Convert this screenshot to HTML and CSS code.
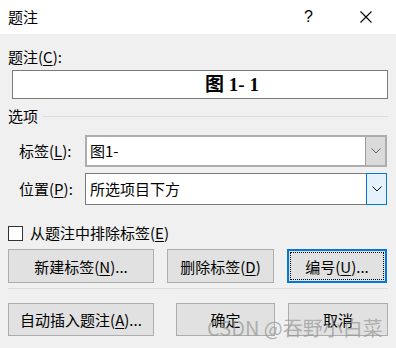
FILE: index.html
```html
<!DOCTYPE html>
<html lang="zh-CN">
<head>
    <meta charset="UTF-8">
    <title>题注</title>
    <link rel="stylesheet" href="styles.css">
</head>
<body>
    <div class="dialog">
        <div class="titlebar">
            <span class="title">题注</span>
            <span class="help">?</span>
            <span class="close">
                <svg width="12" height="12" viewBox="0 0 12 12"><path d="M0.5 0.5 L11.5 11.5 M11.5 0.5 L0.5 11.5" stroke="#000" stroke-width="1.1" fill="none"/></svg>
            </span>
        </div>

        <div class="content">
            <div class="caption-label">题注(<u>C</u>):</div>
            <div class="caption-box">图 1- 1</div>

            <div class="group-head">
                <span>选项</span>
                <div class="rule"></div>
            </div>

            <div class="field">
                <span class="field-label">标签(<u>L</u>):</span>
                <div class="select hover">
                    <span class="select-text">图1-</span>
                    <span class="drop">
                        <svg width="10" height="6" viewBox="0 0 10 6"><path d="M0.5 0.5 L5 5 L9.5 0.5" stroke="#606060" stroke-width="1" fill="none"/></svg>
                    </span>
                </div>
            </div>
            <div class="field">
                <span class="field-label">位置(<u>P</u>):</span>
                <div class="select">
                    <span class="select-text">所选项目下方</span>
                    <span class="drop active">
                        <svg width="10" height="6" viewBox="0 0 10 6"><path d="M0.5 0.5 L5 5 L9.5 0.5" stroke="#000" stroke-width="1" fill="none"/></svg>
                    </span>
                </div>
            </div>

            <label class="check">
                <span class="box"></span>
                从题注中排除标签(<u>E</u>)
            </label>

            <div class="btn-row">
                <button class="btn wide">新建标签(<u>N</u>)...</button>
                <button class="btn mid">删除标签(<u>D</u>)</button>
                <button class="btn small focus"><span class="focus-ring">编号(<u>U</u>)...</span></button>
            </div>

            <div class="sep"></div>

            <div class="btn-row bottom">
                <button class="btn wide">自动插入题注(<u>A</u>)...</button>
                <button class="btn small ok">确定</button>
                <button class="btn small">取消</button>
            </div>
        </div>

        <div class="watermark">CSDN @吞野小白菜</div>
    </div>
</body>
</html>
```

FILE: styles.css
```css
body {
    margin: 0;
    font-family: "Noto Sans CJK SC", "Noto Sans", sans-serif;
    font-size: 15px;
    color: #000;
}
.dialog {
    position: relative;
    width: 396px;
    height: 348px;
    background: #f0f0f0;
    overflow: hidden;
}
.titlebar {
    height: 34px;
    background: #fff;
    display: flex;
    align-items: center;
    padding-left: 8px;
}
.title {
    flex: 1;
    line-height: 20px;
}
.help {
    width: 20px;
    margin-right: 36px;
    font-family: "Liberation Sans", sans-serif;
    font-size: 16px;
}
.close {
    width: 12px;
    height: 12px;
    margin-right: 24px;
    display: flex;
}
.content {
    padding: 0 8px;
}
u {
    text-decoration: underline;
    text-underline-offset: 2px;
}
.caption-label {
    margin-top: 13px;
    line-height: 20px;
}
.caption-box {
    margin: 3px 0 0 4px;
    height: 27px;
    border: 1px solid #7a7a7a;
    background: #fff;
    font-family: "Liberation Serif", "Noto Sans CJK SC", serif;
    font-weight: bold;
    font-size: 19px;
    line-height: 27px;
    padding-left: 64px;
    text-align: center;
    width: 310px;
}
.group-head {
    display: flex;
    align-items: center;
    margin-top: 7px;
    line-height: 20px;
}
.rule {
    flex: 1;
    height: 1px;
    background: #dcdcdc;
    margin-left: 5px;
}
.field {
    display: flex;
    align-items: center;
    margin-left: 11px;
    margin-top: 6px;
}
.group-head + .field {
    margin-top: 9px;
}
.field-label {
    width: 66px;
    line-height: 20px;
}
.select {
    display: flex;
    width: 302px;
    height: 32px;
    border: 1px solid #7a7a7a;
    background: #fff;
    box-sizing: border-box;
}
.select.hover {
    border: 2px solid #adadad;
}
.select-text {
    flex: 1;
    padding-left: 4px;
    line-height: 30px;
}
.hover .select-text {
    padding-left: 3px;
    line-height: 28px;
}
.drop {
    width: 19px;
    background: #dadada;
    border-left: 1px solid #9c9c9c;
    display: flex;
    align-items: center;
    justify-content: center;
}
.drop.active {
    background: #e5f1fb;
    border: 1px solid #0078d7;
    margin: -1px -1px -1px 0;
}
.check {
    display: flex;
    align-items: center;
    margin-top: 18px;
    line-height: 20px;
}
.box {
    width: 13px;
    height: 13px;
    border: 1px solid #333;
    background: #fff;
    margin-right: 7px;
}
.btn-row {
    display: flex;
    margin-top: 6px;
}
.btn {
    height: 34px;
    background: #e1e1e1;
    border: 1px solid #adadad;
    font-family: inherit;
    font-size: 15px;
    color: #000;
    padding: 0;
    box-sizing: border-box;
}
.wide {
    width: 146px;
}
.mid {
    width: 107px;
    margin-left: 13px;
}
.small {
    width: 100px;
    margin-left: 13px;
}
.focus {
    border: 2px solid #0078d7;
    padding: 1px;
}
.focus-ring {
    display: flex;
    align-items: center;
    justify-content: center;
    height: 100%;
    border: 1px dotted #000;
    box-sizing: border-box;
}
.sep {
    height: 1px;
    background: #dcdcdc;
    margin-top: 5px;
}
.bottom {
    margin-top: 14px;
}
.bottom .btn {
    height: 33px;
}
.ok {
    width: 99px;
    margin-left: 22px;
}
.watermark {
    position: absolute;
    left: 207px;
    top: 318px;
    font-size: 20px;
    line-height: 20px;
    color: rgba(150, 150, 150, 0.7);
    pointer-events: none;
}
```
